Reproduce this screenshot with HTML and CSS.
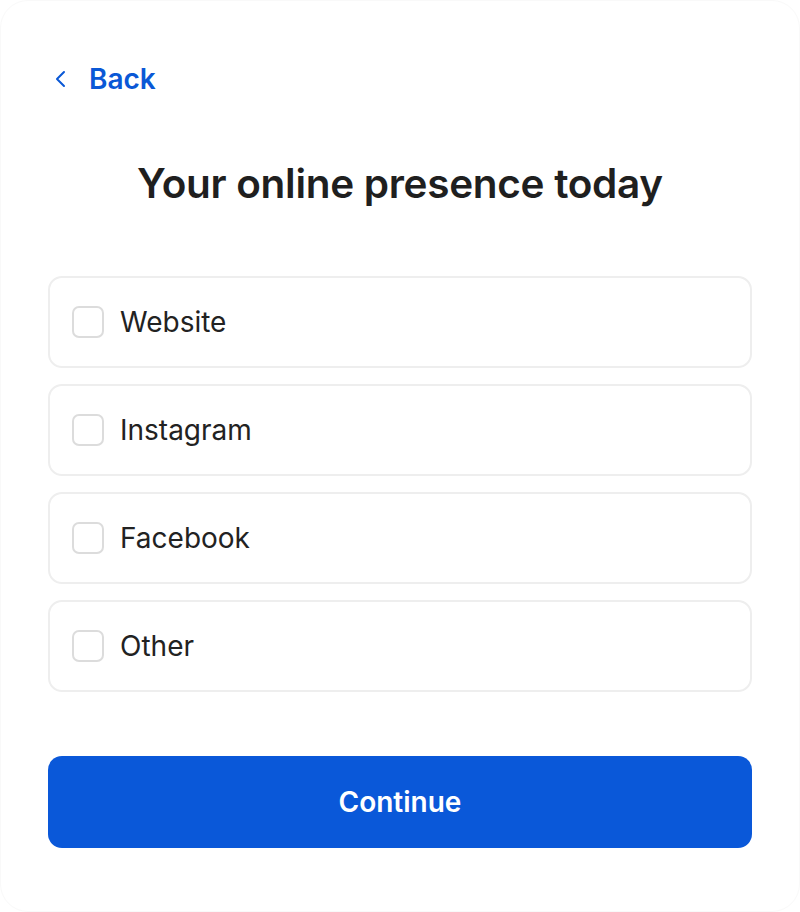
FILE: index.html
```html
<!DOCTYPE html>
<html lang="en">
<head>
    <meta charset="UTF-8">
    <meta name="viewport" content="width=device-width, initial-scale=1.0">
    <title>Your online presence today</title>
    <link rel="stylesheet" href="styles.css">
</head>
<body>

    <div class="card">
        <a class="back" href="#">
            <svg width="14" height="20" viewBox="0 0 14 20"><path d="M10 3 L3 10 L10 17" fill="none" stroke="#0a58d6" stroke-width="2" stroke-linecap="round" stroke-linejoin="round"/></svg>
            <span>Back</span>
        </a>

        <h1>Your online presence today</h1>

        <div class="options">
            <label class="option"><span class="box"></span>Website</label>
            <label class="option"><span class="box"></span>Instagram</label>
            <label class="option"><span class="box"></span>Facebook</label>
            <label class="option"><span class="box"></span>Other</label>
        </div>

        <button class="continue">Continue</button>
    </div>

</body>
</html>
```

FILE: styles.css
```css
body { margin: 0; background: #fff; font-family: Inter, "Noto Sans", sans-serif; }
.card { box-sizing: border-box; width: 800px; height: 912px; border: 1px solid #f9f9f9; border-radius: 28px; padding: 59px 47px 0; }
.back { display: flex; align-items: center; gap: 21px; color: #0a58d6; text-decoration: none; font-size: 28px; font-weight: 600; height: 38px; padding-left: 6px; }
h1 { margin: 60px 0 0; text-align: center; font-size: 40.5px; font-weight: 600; color: #1f1f1f; line-height: 52px; letter-spacing: -0.3px; }
.options { display: flex; flex-direction: column; gap: 16px; margin-top: 66px; }
.option { display: flex; align-items: center; gap: 16px; height: 92px; box-sizing: border-box; border: 2px solid #eeeeee; border-radius: 14px; padding: 0 22px; font-size: 28px; color: #222; }
.box { width: 32px; height: 32px; box-sizing: border-box; border: 2px solid #dcdcdc; border-radius: 7px; }
.continue { display: block; width: 100%; height: 92px; margin-top: 64px; border: none; border-radius: 14px; background: #0a58d9; color: #fff; font-family: inherit; font-size: 28px; font-weight: 600; cursor: pointer; }
```
